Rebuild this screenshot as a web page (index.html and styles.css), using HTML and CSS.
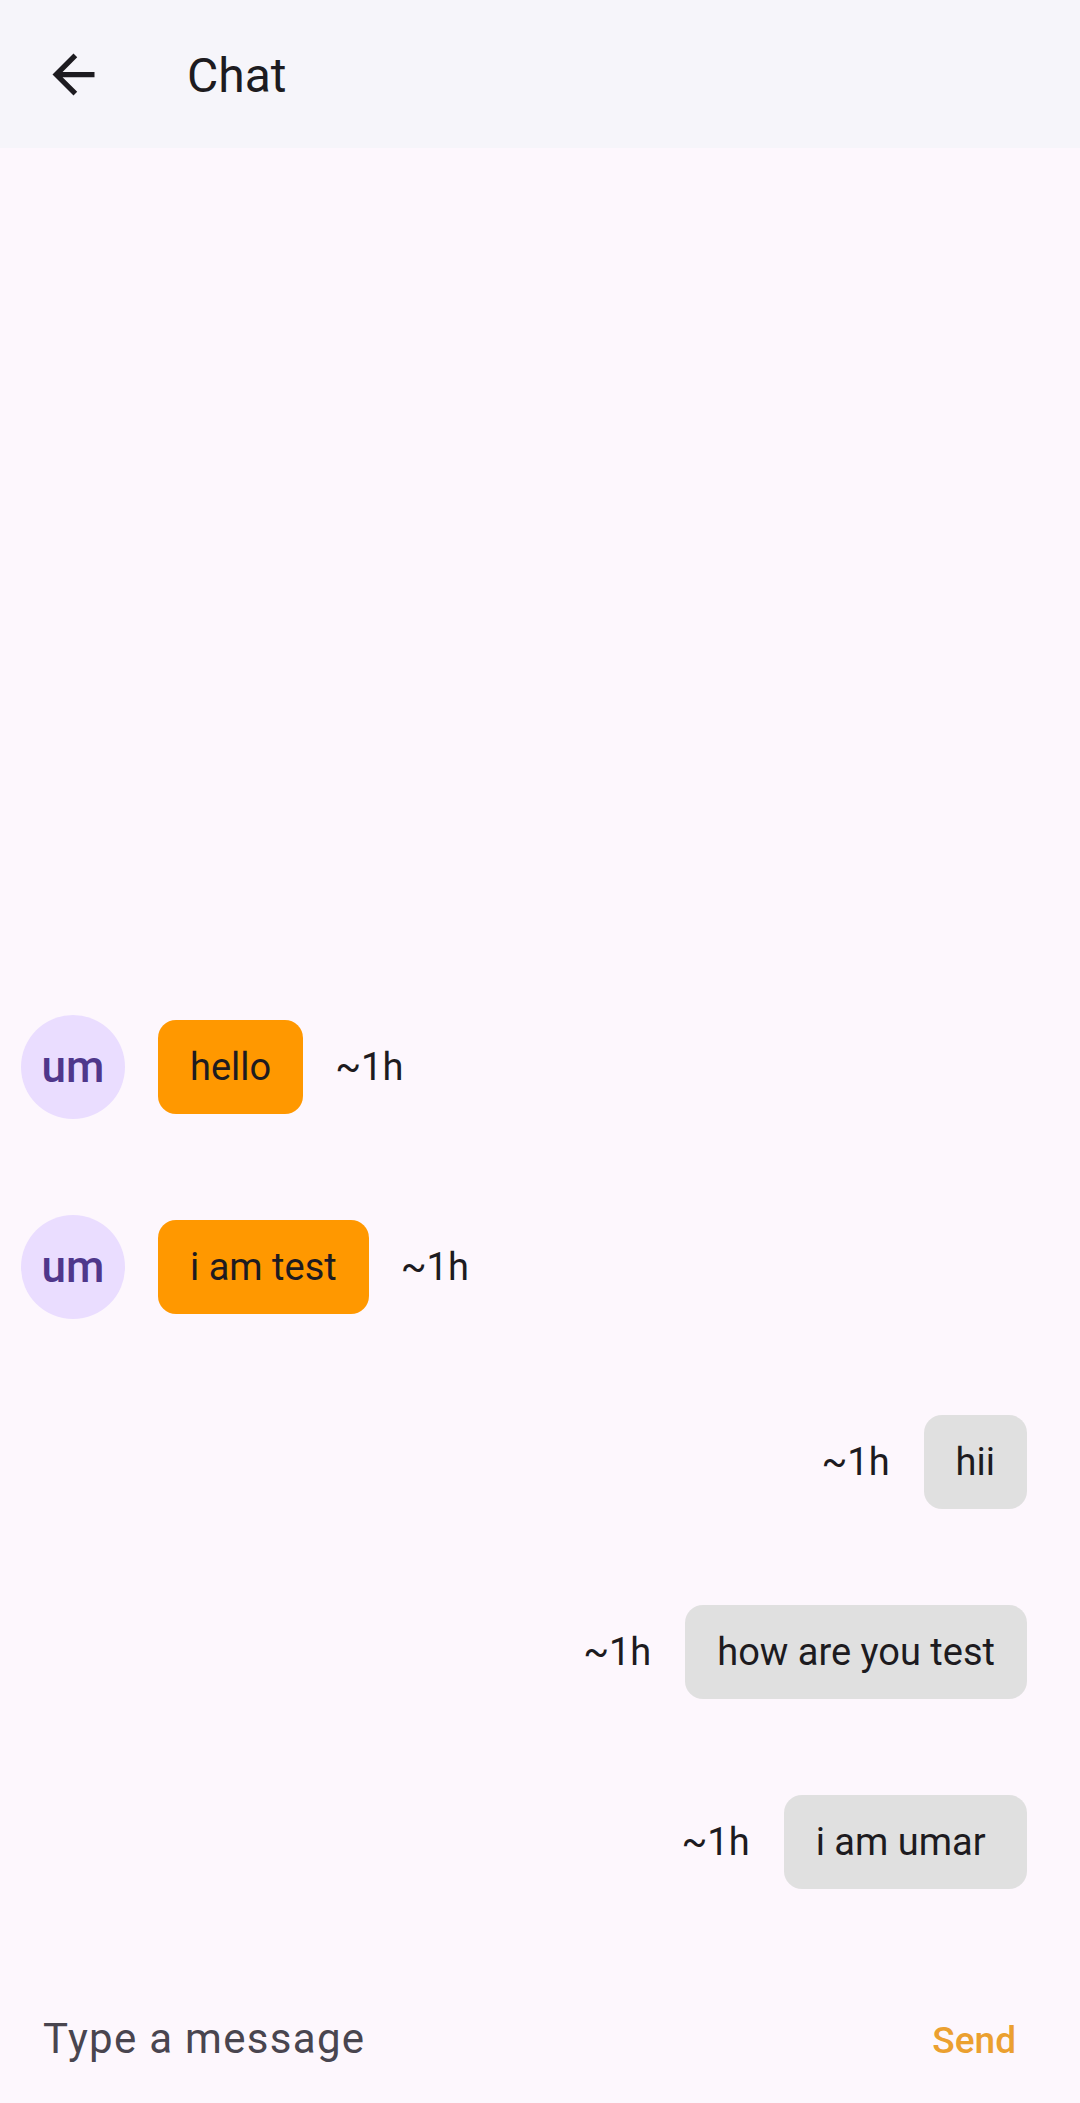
FILE: index.html
```html
<!DOCTYPE html>
<html lang="en">
<head>
<meta charset="utf-8">
<title>Chat</title>
<link rel="stylesheet" href="styles.css">
</head>
<body>
<div class="app">
  <header class="appbar">
    <button class="back" aria-label="Back">
      <svg width="63" height="63" viewBox="0 0 24 24"><path d="M20 11H7.83l5.59-5.59L12 4l-8 8 8 8 1.41-1.41L7.83 13H20v-2z" fill="#1d1b20"/></svg>
    </button>
    <h1 class="title">Chat</h1>
  </header>
  <main class="messages">
    <div class="row in">
      <div class="avatar">um</div>
      <div class="bubble orange">hello</div>
      <span class="time">~1h</span>
    </div>
    <div class="row in">
      <div class="avatar">um</div>
      <div class="bubble orange">i am test</div>
      <span class="time">~1h</span>
    </div>
    <div class="row out">
      <span class="time">~1h</span>
      <div class="bubble gray">hii</div>
    </div>
    <div class="row out">
      <span class="time">~1h</span>
      <div class="bubble gray">how are you test</div>
    </div>
    <div class="row out">
      <span class="time">~1h</span>
      <div class="bubble gray">i am umar&nbsp;</div>
    </div>
  </main>
  <footer class="composer">
    <span class="placeholder">Type a message</span>
    <span class="send">Send</span>
  </footer>
</div>
</body>
</html>
```
FILE: styles.css
```css
* { box-sizing: border-box; }
html, body {
  margin: 0;
  padding: 0;
  background: #fdf7fd;
  font-family: Roboto, "Noto Sans", "Liberation Sans", sans-serif;
  color: #1d1b20;
}
.app {
  width: 1080px;
  height: 2103px;
  display: flex;
  flex-direction: column;
}
.appbar {
  height: 148px;
  flex: none;
  background: #f6f5fa;
  display: flex;
  align-items: center;
  padding-left: 42px;
}
.back {
  width: 63px;
  height: 63px;
  padding: 0;
  border: 0;
  background: transparent;
  display: flex;
}
.title {
  margin: 4px 0 0 82px;
  font-size: 48px;
  font-weight: 400;
  line-height: 1;
  color: #1d1b20;
}
.messages {
  flex: 1;
  display: flex;
  flex-direction: column;
  justify-content: flex-end;
}
.row {
  display: flex;
  align-items: center;
  padding: 48px 0;
}
.row.in {
  padding-left: 21px;
}
.row.out {
  justify-content: flex-end;
  padding-right: 53px;
}
.avatar {
  width: 104px;
  height: 104px;
  border-radius: 50%;
  background: #eaddff;
  color: #4f378b;
  font-size: 44px;
  font-weight: 500;
  display: flex;
  align-items: center;
  justify-content: center;
  margin-right: 33px;
}
.bubble {
  height: 94px;
  padding: 0 32px;
  border-radius: 18px;
  font-size: 38px;
  line-height: 94px;
  color: #1d1b20;
  white-space: nowrap;
}
.orange { background: #ff9800; }
.gray { background: #e0e0e0; }
.time {
  font-size: 38px;
  color: #1d1b20;
}
.row.in .time { margin-left: 32px; }
.row.out .time { margin-right: 34px; }
.composer {
  height: 166px;
  flex: none;
  display: flex;
  align-items: baseline;
  justify-content: space-between;
  padding: 73px 64px 0 43px;
}
.placeholder {
  font-size: 42px;
  line-height: 58px;
  letter-spacing: 1.3px;
  color: #49454f;
}
.send {
  font-size: 37px;
  font-weight: 500;
  color: #eba030;
}
```
